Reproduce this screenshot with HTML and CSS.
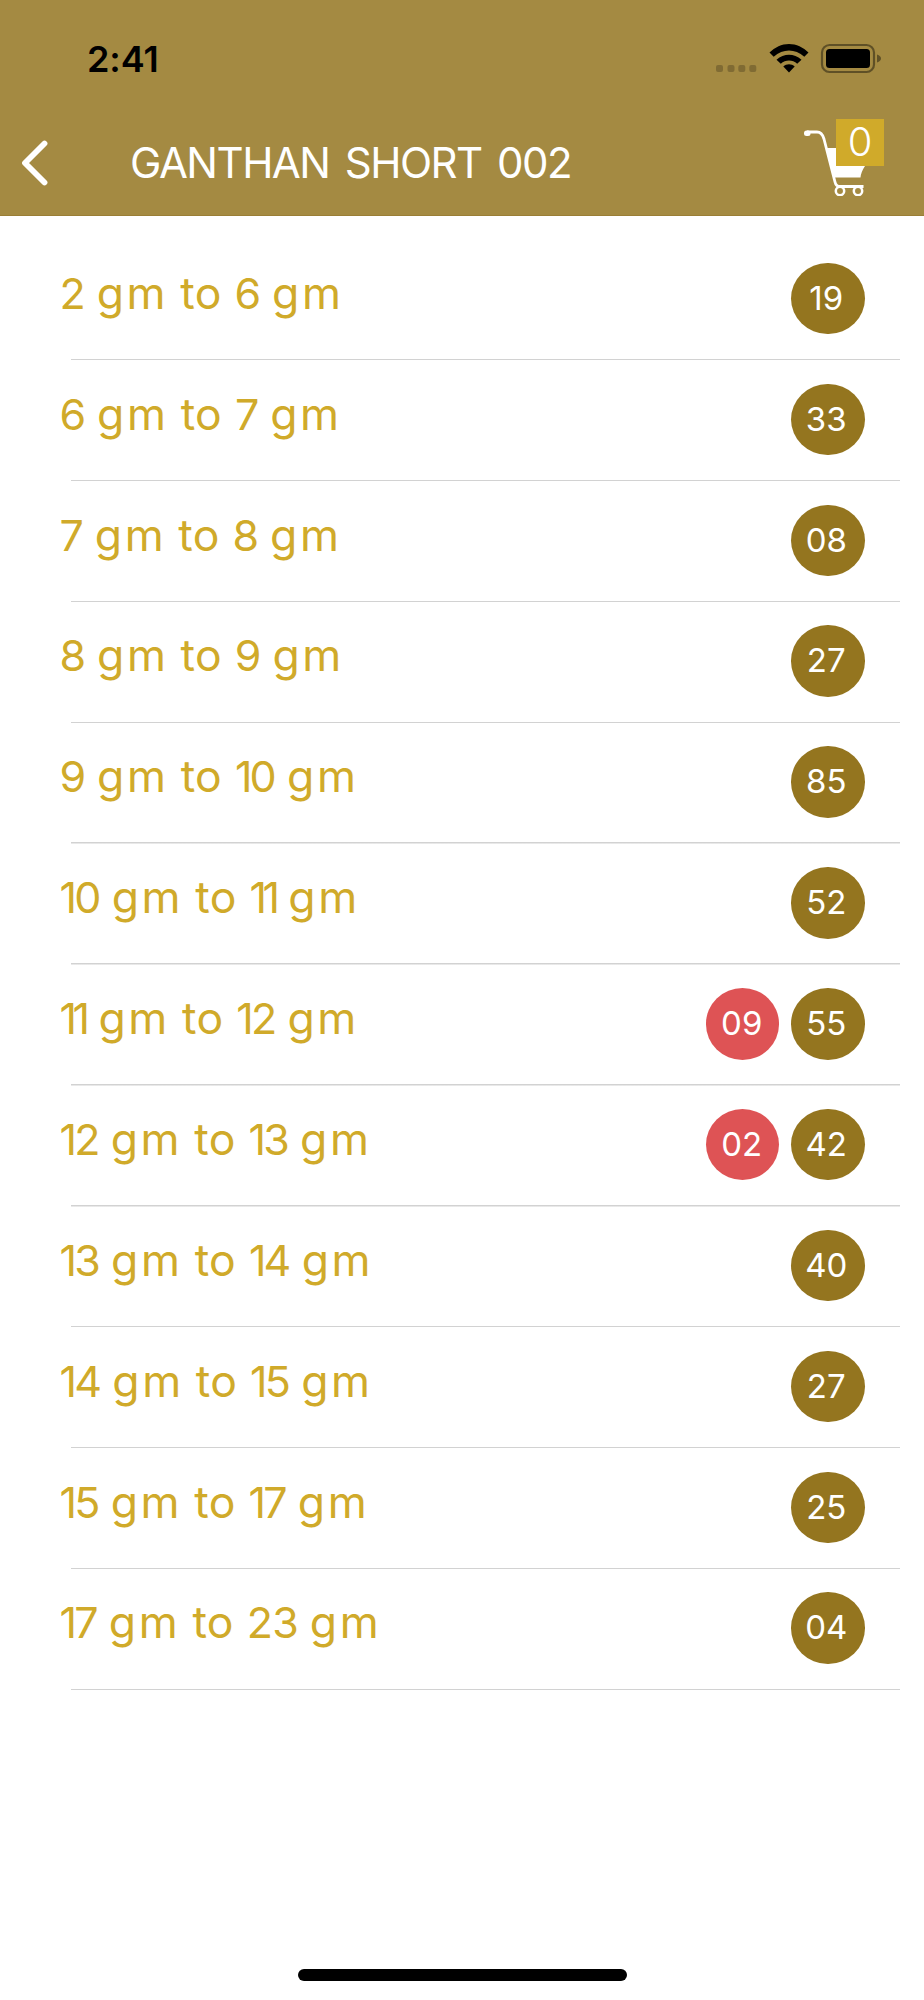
FILE: index.html
```html
<!DOCTYPE html>
<html lang="en">
<head>
<meta charset="utf-8">
<title>Ganthan Short 002</title>
<link rel="stylesheet" href="styles.css">
</head>
<body>
<div class="screen">
  <header class="header">
    <div class="status">
      <span class="time">2:41</span>
      <svg class="status-icons" width="166" height="32" viewBox="0 0 166 32">
        <g fill="#000" fill-opacity=".22"><rect x="0" y="21" width="7" height="7" rx="2"/><rect x="11.500" y="21" width="7" height="7" rx="2"/><rect x="22.300" y="21" width="7" height="7" rx="2"/><rect x="33.300" y="21" width="7" height="7" rx="2"/></g>
        <path d="M53.500 8.500Q57.500 4.500 62.500 2.200C69 -.8 77 -.8 83.500 2.200Q88.500 4.500 92.500 8.500L88.300 12.700C79 4.500 67 4.500 57.700 12.700Z"/>
        <path d="M60.500 15.700C68 9 78 9 85.500 15.700L81.200 19.700C76.500 15.500 69.500 15.500 64.800 19.700Z"/>
        <path d="M67.300 22.500C70.500 19.500 75.500 19.500 78.700 22.500L73 28.500Z"/>
        <rect x="106" y="1" width="52" height="27" rx="7.500" fill="none" stroke="#000" stroke-opacity=".42" stroke-width="2.200"/>
        <rect x="110" y="5" width="44" height="19" rx="3.500"/>
        <path d="M161 10.500Q165 12 165 14.500Q165 17 161 18.500Z" fill-opacity=".42"/>
      </svg>
    </div>
    <div class="navbar">
      <svg class="back" width="32" height="52" viewBox="0 0 32 52"><path d="M24.500 6.500L5 26L24.500 45.500" fill="none" stroke="#fff" stroke-width="5.800" stroke-linecap="round" stroke-linejoin="round"/></svg>
      <h1 class="title">GANTHAN SHORT 002</h1>
      <div class="cart">
        <svg width="64" height="72" viewBox="0 0 64 72">
          <path d="M3 8H13Q18 8 20 15L31 58Q32 62.500 36 62.500H59.500" fill="none" stroke="#fff" stroke-width="2.800"/>
          <rect x="0" y="6.500" width="6.500" height="5.500" rx="2.500" fill="#fff"/>
          <path d="M22 24H64L61 42Q57 48 56.500 53.500H29.500Z" fill="#fff"/>
          <g fill="none" stroke="#fff" stroke-width="2.500"><circle cx="36" cy="67" r="4.200"/><circle cx="54" cy="67" r="4.200"/></g>
        </svg>
        <span class="cart-count">0</span>
      </div>
    </div>
  </header>
  <main class="list">
    <div class="row"><span class="label"><span class="n">2 </span><span class="u">gm </span>to <span class="n">6 </span><span class="u">gm</span></span><span class="badge">19</span></div>
    <div class="row"><span class="label"><span class="n">6 </span><span class="u">gm </span>to <span class="n">7 </span><span class="u">gm</span></span><span class="badge">33</span></div>
    <div class="row"><span class="label"><span class="n">7 </span><span class="u">gm </span>to <span class="n">8 </span><span class="u">gm</span></span><span class="badge">08</span></div>
    <div class="row"><span class="label"><span class="n">8 </span><span class="u">gm </span>to <span class="n">9 </span><span class="u">gm</span></span><span class="badge">27</span></div>
    <div class="row"><span class="label"><span class="n">9 </span><span class="u">gm </span>to <span class="n teen">10 </span><span class="u">gm</span></span><span class="badge">85</span></div>
    <div class="row"><span class="label"><span class="n teen">10 </span><span class="u">gm </span>to <span class="n narrow">11 </span><span class="u">gm</span></span><span class="badge">52</span></div>
    <div class="row"><span class="label"><span class="n narrow">11 </span><span class="u">gm </span>to <span class="n teen">12 </span><span class="u">gm</span></span><span class="badge red">09</span><span class="badge">55</span></div>
    <div class="row"><span class="label"><span class="n teen">12 </span><span class="u">gm </span>to <span class="n teen">13 </span><span class="u">gm</span></span><span class="badge red">02</span><span class="badge">42</span></div>
    <div class="row"><span class="label"><span class="n teen">13 </span><span class="u">gm </span>to <span class="n teen">14 </span><span class="u">gm</span></span><span class="badge">40</span></div>
    <div class="row"><span class="label"><span class="n teen">14 </span><span class="u">gm </span>to <span class="n teen">15 </span><span class="u">gm</span></span><span class="badge">27</span></div>
    <div class="row"><span class="label"><span class="n teen">15 </span><span class="u">gm </span>to <span class="n teen">17 </span><span class="u">gm</span></span><span class="badge">25</span></div>
    <div class="row"><span class="label"><span class="n teen">17 </span><span class="u">gm </span>to <span class="n">23 </span><span class="u">gm</span></span><span class="badge">04</span></div>
  </main>
  <footer class="footer"><div class="home-indicator"></div></footer>
</div>
</body>
</html>
```
FILE: styles.css
```css
* { box-sizing: border-box; }
body { margin: 0; background: #fff; font-family: Inter, "Open Sans", sans-serif; }
.screen { width: 924px; height: 2000px; display: flex; flex-direction: column; background: #fff; }
.header { height: 216px; background: #a48a42; border-bottom: 1px solid #9a7e36; flex: none; }
.status { height: 108px; display: flex; justify-content: space-between; padding: 43px 42px 0 87px; }
.time { font-size: 36px; line-height: 32px; font-weight: 600; letter-spacing: -0.1px; color: #000; }
.status-icons { display: block; overflow: visible; margin-top: 1px; }
.navbar { height: 107px; display: flex; align-items: flex-start; padding: 11px 40px 0 20px; }
.back { margin-top: 18px; }
.title { margin: 20px 0 0 78px; font-size: 42px; line-height: 48px; font-weight: 400; letter-spacing: -1.5px; word-spacing: 5px; color: #fff; white-space: nowrap; }
.cart { position: relative; width: 80px; height: 90px; margin-left: auto; padding-top: 5px; }
.cart svg { display: block; }
.cart-count { position: absolute; left: 32px; top: 0; width: 48px; height: 47px; background: #d0aa2a; color: #fff; font-size: 40px; line-height: 46px; text-align: center; font-weight: 350; }
.list { height: 1450.5px; margin-top: 23.5px; display: grid; grid-template-rows: repeat(12, 1fr); flex: none; }
.row { display: flex; align-items: flex-start; gap: 12px; padding: 23.3px 59.5px 0 59.5px; background: linear-gradient(#d2d2d2, #d2d2d2) 71px 100% / 829px 1.5px no-repeat; }
.label { flex: 1; font-size: 44.5px; line-height: 60px; letter-spacing: 0.3px; color: #d0aa2a; white-space: nowrap; }
.n { font-size: 43px; letter-spacing: -0.6px; }
.teen { letter-spacing: -2.8px; word-spacing: 3.8px; }
.narrow { letter-spacing: -4.4px; word-spacing: 5px; }
.u { letter-spacing: 2.6px; word-spacing: -3px; }
.badge { width: 73.5px; height: 71.5px; border-radius: 50%; background: #94751f; color: #fff; font-size: 33px; line-height: 71px; padding-right: 3px; text-align: center; font-weight: 400; }
.red { background: #de5355; padding-right: 1px; }
.footer { margin-top: auto; height: 31.5px; display: flex; justify-content: center; }
.home-indicator { width: 329px; height: 12.5px; border-radius: 6px; background: #000; }
```
